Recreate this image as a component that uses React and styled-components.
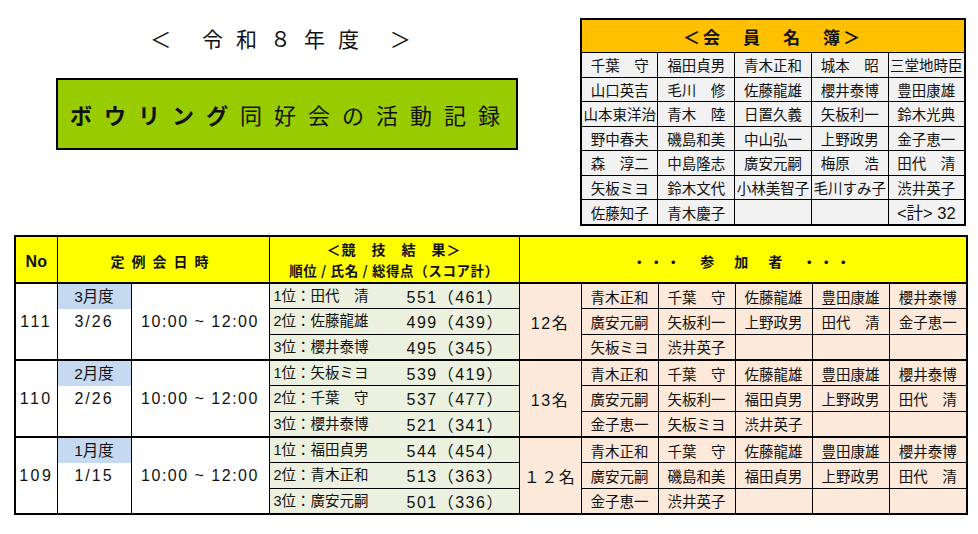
import styled, { createGlobalStyle } from "styled-components";

const GlobalStyle = createGlobalStyle`
  body {
    margin: 0;
    background: #fff;
    color: #111;
    font-family: "Liberation Sans", "Noto Sans CJK JP", sans-serif;
  }
`;

const members = [
  ["千葉　守", "福田貞男", "青木正和", "城本　昭", "三堂地時臣"],
  ["山口英吉", "毛川　修", "佐藤龍雄", "櫻井泰博", "豊田康雄"],
  ["山本東洋治", "青木　陸", "日置久義", "矢板利一", "鈴木光典"],
  ["野中春夫", "磯島和美", "中山弘一", "上野政男", "金子恵一"],
  ["森　淳二", "中島隆志", "廣安元嗣", "梅原　浩", "田代　清"],
  ["矢板ミヨ", "鈴木文代", "小林美智子", "毛川すみ子", "渋井英子"],
  ["佐藤知子", "青木慶子", "", "", ""],
];

const meetings = [
  {
    no: "111",
    month: "3月度",
    date: "3/26",
    count: "12名",
    results: [
      ["1位：田代　清", "551（461）"],
      ["2位：佐藤龍雄", "499（439）"],
      ["3位：櫻井泰博", "495（345）"],
    ],
    people: [
      ["青木正和", "千葉　守", "佐藤龍雄", "豊田康雄", "櫻井泰博"],
      ["廣安元嗣", "矢板利一", "上野政男", "田代　清", "金子恵一"],
      ["矢板ミヨ", "渋井英子", "", "", ""],
    ],
  },
  {
    no: "110",
    month: "2月度",
    date: "2/26",
    count: "13名",
    results: [
      ["1位：矢板ミヨ", "539（419）"],
      ["2位：千葉　守", "537（477）"],
      ["3位：櫻井泰博", "521（341）"],
    ],
    people: [
      ["青木正和", "千葉　守", "佐藤龍雄", "豊田康雄", "櫻井泰博"],
      ["廣安元嗣", "矢板利一", "福田貞男", "上野政男", "田代　清"],
      ["金子恵一", "矢板ミヨ", "渋井英子", "", ""],
    ],
  },
  {
    no: "109",
    month: "1月度",
    date: "1/15",
    count: "１２名",
    results: [
      ["1位：福田貞男", "544（454）"],
      ["2位：青木正和", "513（363）"],
      ["3位：廣安元嗣", "501（336）"],
    ],
    people: [
      ["青木正和", "千葉　守", "佐藤龍雄", "豊田康雄", "櫻井泰博"],
      ["廣安元嗣", "磯島和美", "福田貞男", "上野政男", "田代　清"],
      ["金子恵一", "渋井英子", "", "", ""],
    ],
  },
];

const colWidths = [42, 74, 138, 250, 62, 77, 77, 77, 77, 78];

export default function App() {
  const lastRow = members.length - 1;
  return (
    <>
      <GlobalStyle />
      <Page>
        <Top>
          <TitleArea>
            <Title>＜ 令和８年度 ＞</Title>
            <Banner>
              <Kana>ボウリング</Kana>同好会の活動記録
            </Banner>
          </TitleArea>
          <MemberTable>
            <tbody>
              <tr>
                <MemberHead colSpan={5}>＜会　員　名　簿＞</MemberHead>
              </tr>
              {members.map((row, i) => (
                <tr key={i}>
                  {row.map((name, j) =>
                    i === lastRow && j === 4 ? (
                      <MemberCell key={j}>
                        <Total>&lt;計&gt; 32</Total>
                      </MemberCell>
                    ) : (
                      <MemberCell key={j}>{name}</MemberCell>
                    )
                  )}
                </tr>
              ))}
            </tbody>
          </MemberTable>
        </Top>

        <RecordTable>
          <colgroup>
            {colWidths.map((w, i) => (
              <col key={i} style={{ width: w }} />
            ))}
          </colgroup>
          <thead>
            <tr>
              <HeadCell>
                <NoLabel>No</NoLabel>
              </HeadCell>
              <HeadCell colSpan={2}>
                <Spaced>定例会日時</Spaced>
              </HeadCell>
              <HeadCell>
                <ResultTitle>＜競　技　結　果＞</ResultTitle>
                <ResultSub>順位 / 氏名 / 総得点（スコア計）</ResultSub>
              </HeadCell>
              <HeadCell colSpan={6}>
                <Spaced $gap={3}>・・・　参　加　者　・・・</Spaced>
              </HeadCell>
            </tr>
          </thead>
          <tbody>
            {meetings.map((m) =>
              m.results.map((r, i) => (
                <tr key={m.no + i}>
                  {i === 0 && (
                    <>
                      <Cell rowSpan={3} $top>
                        <Digits $gap={2.5}>{m.no}</Digits>
                      </Cell>
                      <DateCell rowSpan={3} $top>
                        <DateStack>
                          <MonthLabel>{m.month}</MonthLabel>
                          <DateText>{m.date}</DateText>
                        </DateStack>
                      </DateCell>
                      <Cell rowSpan={3} $top>
                        <Digits>10:00 ~ 12:00</Digits>
                      </Cell>
                    </>
                  )}
                  <ResultCell $top={i === 0}>
                    <ResultLine>
                      <span>{r[0]}</span>
                      <Digits>{r[1]}</Digits>
                    </ResultLine>
                  </ResultCell>
                  {i === 0 && (
                    <Cell rowSpan={3} $top $bg="#fde9d9">
                      <Digits>{m.count}</Digits>
                    </Cell>
                  )}
                  {m.people[i].map((p, j) => (
                    <Cell key={j} $top={i === 0} $bg="#fde9d9">
                      {p}
                    </Cell>
                  ))}
                </tr>
              ))
            )}
          </tbody>
        </RecordTable>
      </Page>
    </>
  );
}

const Page = styled.div`
  width: 978px;
  padding: 18px 0 0 14px;
  box-sizing: border-box;
`;

const Top = styled.div`
  display: flex;
  align-items: flex-start;
`;

const TitleArea = styled.div`
  width: 566px;
  padding-left: 42px;
  box-sizing: border-box;
  display: flex;
  flex-direction: column;
`;

const Title = styled.div`
  width: 462px;
  margin-top: 5px;
  height: 30px;
  line-height: 30px;
  text-align: center;
  font-family: "Noto Sans CJK JP", sans-serif;
  font-size: 21px;
  letter-spacing: 13px;
`;

const Banner = styled.div`
  margin-top: 25px;
  width: 462px;
  height: 72px;
  box-sizing: border-box;
  border: 2px solid #000;
  background: #99cc00;
  line-height: 68px;
  text-align: center;
  white-space: nowrap;
  font-family: "Noto Sans CJK JP", sans-serif;
  font-size: 22px;
  letter-spacing: 12px;
  padding-left: 8px;
  color: #111;
`;

const Kana = styled.span`
  font-weight: 700;
`;

const MemberTable = styled.table`
  width: 386px;
  table-layout: fixed;
  border-collapse: collapse;
  border: 2px solid #000;
`;

const MemberHead = styled.th`
  height: 32px;
  padding: 0;
  background: #ffc000;
  border: 1px solid #000;
  font-family: "Noto Sans CJK JP", sans-serif;
  font-size: 17px;
  font-weight: 700;
  letter-spacing: 3px;
`;

const MemberCell = styled.td`
  height: 23.5px;
  padding: 0;
  border: 1px solid #000;
  background: #f2f2f2;
  text-align: center;
  font-size: 14.5px;
  white-space: nowrap;
  overflow: hidden;
`;

const Total = styled.span`
  font-size: 16.5px;
`;

const RecordTable = styled.table`
  margin-top: 9px;
  width: 952px;
  table-layout: fixed;
  border-collapse: collapse;
  border: 2px solid #000;
`;

const HeadCell = styled.th`
  height: 45px;
  padding: 0;
  background: #ffff00;
  border: 1px solid #000;
  border-bottom-width: 2px;
  font-family: "Noto Sans CJK JP", sans-serif;
  font-weight: 700;
  text-align: center;
  white-space: nowrap;
`;

const NoLabel = styled.span`
  font-family: "Liberation Sans", sans-serif;
  font-size: 16px;
`;

const Spaced = styled.span`
  font-size: 14px;
  letter-spacing: ${(p) => p.$gap ?? 7}px;
`;

const ResultTitle = styled.div`
  font-size: 14px;
  letter-spacing: 1px;
  line-height: 21px;
`;

const ResultSub = styled.div`
  font-size: 13.5px;
  letter-spacing: 0.6px;
  line-height: 20px;
`;

const Cell = styled.td`
  height: 23.5px;
  padding: 0;
  border: 1px solid #000;
  border-top-width: ${(p) => (p.$top ? "2px" : "1px")};
  background: ${(p) => p.$bg || "#fff"};
  text-align: center;
  font-size: 14.5px;
  white-space: nowrap;
  overflow: hidden;
`;

const DateCell = styled(Cell)`
  vertical-align: top;
`;

const DateStack = styled.div`
  display: grid;
  grid-template-rows: 25px 26px 24px;
`;

const MonthLabel = styled.div`
  background: #c5d9f1;
  line-height: 25px;
  font-size: 15.5px;
`;

const DateText = styled.div`
  line-height: 26px;
  letter-spacing: 2px;
  font-size: 16px;
`;

const ResultCell = styled(Cell)`
  background: #ebf1de;
  text-align: left;
`;

const ResultLine = styled.div`
  display: grid;
  grid-template-columns: 133px auto;
  padding-left: 4px;
  font-size: 14.5px;
`;

const Digits = styled.span`
  font-size: 16px;
  letter-spacing: ${(p) => p.$gap ?? 1.5}px;
`;
